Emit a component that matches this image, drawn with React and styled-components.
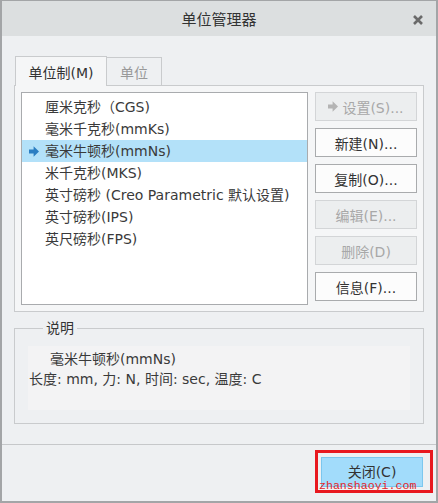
import React, { useState } from 'react';
import styled, { createGlobalStyle } from 'styled-components';

const GlobalStyle = createGlobalStyle`
    html, body {
        margin: 0;
        padding: 0;
        background: #eef0f2;
    }
    body {
        font-family: "DejaVu Sans", "Noto Sans CJK SC", sans-serif;
        font-size: 14px;
        color: #333;
    }
`;

const systems = [
    '厘米克秒（CGS)',
    '毫米千克秒(mmKs)',
    '毫米牛顿秒(mmNs)',
    '米千克秒(MKS)',
    '英寸磅秒 (Creo Parametric 默认设置)',
    '英寸磅秒(IPS)',
    '英尺磅秒(FPS)',
];

const Window = styled.div`
    width: 438px;
    height: 503px;
    box-sizing: border-box;
    border: 2px solid #a3a5a7;
    border-top-width: 1px;
    background: #eef0f2;
    display: flex;
    flex-direction: column;
`;

const TitleBar = styled.div`
    height: 35px;
    flex: none;
    background: #dcdfe0;
    display: flex;
    align-items: center;
    justify-content: center;
    position: relative;
    font-size: 15px;
    color: #333;
`;

const CloseX = styled.button`
    position: absolute;
    right: 12px;
    top: 13px;
    width: 12px;
    height: 12px;
    padding: 0;
    border: none;
    background: transparent;
    display: flex;
`;

const Body = styled.div`
    flex: 1;
    padding: 21px 12px 0;
    display: flex;
    flex-direction: column;
`;

const Tabs = styled.div`
    display: flex;
    align-items: flex-end;
    padding-left: 1px;
    height: 29px;
    margin-bottom: -1px;
    position: relative;
    z-index: 1;
`;

const Tab = styled.div`
    box-sizing: border-box;
    width: ${p => p.$w}px;
    height: ${p => (p.$active ? 30 : 29)}px;
    border: 1px solid #c9cbcd;
    border-left-width: ${p => (p.$first ? 1 : 0)}px;
    border-bottom: ${p => (p.$active ? 'none' : '1px solid #c9cbcd')};
    background: ${p => (p.$active ? '#f5f6f7' : '#eef0f2')};
    color: ${p => (p.$active ? '#333' : '#999')};
    display: flex;
    align-items: center;
    justify-content: center;
    font-size: 14px;
`;

const Panel = styled.div`
    box-sizing: border-box;
    height: 227px;
    border: 1px solid #c9cbcd;
    background: #f5f6f7;
    padding: 6px;
    display: flex;
    gap: 7px;
`;

const List = styled.div`
    box-sizing: border-box;
    width: 288px;
    height: 213px;
    border: 1px solid #a9abae;
    background: #fff;
    padding-top: 3px;
    display: flex;
    flex-direction: column;
    overflow: hidden;
`;

const Row = styled.div`
    height: 22px;
    line-height: 22px;
    padding-left: 23px;
    position: relative;
    white-space: nowrap;
    background: ${p => (p.$selected ? '#b3e1f9' : 'transparent')};
    color: #3a3a3a;
    cursor: default;
`;

const RowArrow = styled.span`
    position: absolute;
    left: 7px;
    top: 6px;
    display: flex;
`;

const Buttons = styled.div`
    display: flex;
    flex-direction: column;
    gap: 7px;
`;

const Button = styled.button`
    box-sizing: border-box;
    width: 102px;
    height: 29px;
    border: 1px solid ${p => (p.disabled ? '#d3d5d7' : '#a9abad')};
    background: ${p => (p.disabled ? '#eceeef' : '#fcfcfc')};
    color: ${p => (p.disabled ? '#a8a8a8' : '#333')};
    font-family: inherit;
    font-size: 14px;
    padding: 0;
    display: flex;
    align-items: center;
    justify-content: center;
    gap: 4px;
`;

const Group = styled.fieldset`
    margin: 7px 0 0;
    padding: 9px 13px 12px;
    border: 1px solid #c9cbcd;
    height: 105px;
    box-sizing: border-box;
    min-width: 0;
`;

const Legend = styled.legend`
    padding: 0 3px;
    margin-left: 15px;
    line-height: 18px;
    font-size: 14px;
    color: #333;
`;

const Description = styled.div`
    background: #f3f3f4;
    height: 64px;
    box-sizing: border-box;
    padding-top: 3px;
    line-height: 20px;
    color: #3a3a3a;
`;

const DescLine = styled.div`
    padding-left: ${p => p.$indent || 1}px;
    white-space: nowrap;
`;

const Footer = styled.div`
    margin-top: 20px;
    border-top: 1px solid #c6c8ca;
    flex: 1;
    display: flex;
    justify-content: flex-end;
    align-items: flex-start;
    padding: 5px 3px 0 0;
`;

const Highlight = styled.div`
    border: 3px solid #e8181f;
    padding: 4px 7px 3px 3px;
    position: relative;
`;

const CloseButton = styled.button`
    box-sizing: border-box;
    width: 102px;
    height: 30px;
    border: 1px solid #7cc7ee;
    background: #a2dcfb;
    color: #333;
    font-family: inherit;
    font-size: 14px;
    padding: 0 0 2px;
`;

const Watermark = styled.span`
    position: absolute;
    z-index: 2;
    left: 1px;
    bottom: -3px;
    line-height: 14px;
    font-family: "Liberation Mono", "DejaVu Sans Mono", monospace;
    font-size: 11.6px;
    color: #e0252b;
    pointer-events: none;
`;

const Arrow = ({ color = '#2b7ec2' }) => (
    <svg width="10" height="11" viewBox="0 0 10 11">
        <path d="M0 3.6h4.6V0.2L10 5.5 4.6 10.8V7.4H0z" fill={color} />
    </svg>
);

const App = () => {
    const [selected, setSelected] = useState(2);

    return (
        <>
            <GlobalStyle />
            <Window>
                <TitleBar>
                    单位管理器
                    <CloseX aria-label="关闭">
                        <svg width="12" height="12" viewBox="0 0 12 12">
                            <path d="M2 2l8 8M10 2l-8 8" stroke="#6a6a6a" strokeWidth="2.6" />
                        </svg>
                    </CloseX>
                </TitleBar>
                <Body>
                    <Tabs>
                        <Tab $w={92} $active $first>单位制(M)</Tab>
                        <Tab $w={55}>单位</Tab>
                    </Tabs>
                    <Panel>
                        <List>
                            {systems.map((s, i) => (
                                <Row key={s} $selected={i === selected} onClick={() => setSelected(i)}>
                                    {i === selected && <RowArrow><Arrow /></RowArrow>}
                                    {s}
                                </Row>
                            ))}
                        </List>
                        <Buttons>
                            <Button disabled><Arrow color="#b4b4b4" />设置(S)...</Button>
                            <Button>新建(N)...</Button>
                            <Button>复制(O)...</Button>
                            <Button disabled>编辑(E)...</Button>
                            <Button disabled>删除(D)</Button>
                            <Button>信息(F)...</Button>
                        </Buttons>
                    </Panel>
                    <Group>
                        <Legend>说明</Legend>
                        <Description>
                            <DescLine $indent={22}>{systems[selected]}</DescLine>
                            <DescLine>长度: mm, 力: N, 时间: sec, 温度: C</DescLine>
                        </Description>
                    </Group>
                </Body>
                <Footer>
                    <Highlight>
                        <CloseButton>关闭(C)</CloseButton>
                        <Watermark>zhanshaoyi.com</Watermark>
                    </Highlight>
                </Footer>
            </Window>
        </>
    );
};

export default App;
